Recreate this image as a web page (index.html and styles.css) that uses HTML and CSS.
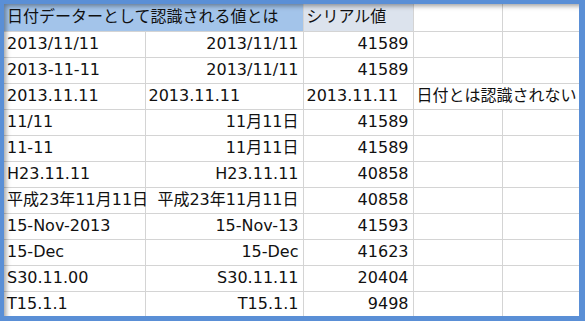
FILE: index.html
```html
<!DOCTYPE html>
<html lang="ja">
<head>
<meta charset="utf-8">
<title>日付データー</title>
<link rel="stylesheet" href="styles.css">
</head>
<body>
<div class="frame">
  <div class="sheet">
    <table class="grid">
      <colgroup>
        <col class="c-a"><col class="c-b"><col class="c-c"><col class="c-d"><col class="c-e">
      </colgroup>
      <thead>
        <tr class="head">
          <th colspan="2" class="h-main">日付データーとして認識される値とは</th>
          <th class="h-serial">シリアル値</th>
          <th></th>
          <th></th>
        </tr>
      </thead>
      <tbody>
        <tr><td>2013/11/11</td><td class="r">2013/11/11</td><td class="r">41589</td><td></td><td></td></tr>
        <tr><td>2013-11-11</td><td class="r">2013/11/11</td><td class="r">41589</td><td></td><td></td></tr>
        <tr><td>2013.11.11</td><td>2013.11.11</td><td>2013.11.11</td><td colspan="2">日付とは認識されない</td></tr>
        <tr><td>11/11</td><td class="r">11月11日</td><td class="r">41589</td><td></td><td></td></tr>
        <tr><td>11-11</td><td class="r">11月11日</td><td class="r">41589</td><td></td><td></td></tr>
        <tr><td>H23.11.11</td><td class="r">H23.11.11</td><td class="r">40858</td><td></td><td></td></tr>
        <tr><td>平成23年11月11日</td><td class="r">平成23年11月11日</td><td class="r">40858</td><td></td><td></td></tr>
        <tr><td>15-Nov-2013</td><td class="r">15-Nov-13</td><td class="r">41593</td><td></td><td></td></tr>
        <tr><td>15-Dec</td><td class="r">15-Dec</td><td class="r">41623</td><td></td><td></td></tr>
        <tr><td>S30.11.00</td><td class="r">S30.11.11</td><td class="r">20404</td><td></td><td></td></tr>
        <tr><td>T15.1.1</td><td class="r">T15.1.1</td><td class="r">9498</td><td></td><td></td></tr>
      </tbody>
    </table>
  </div>
</div>
</body>
</html>
```

FILE: styles.css
```css
html, body {
  margin: 0;
  padding: 0;
}

body {
  background: #5a8fd6;
  font-family: "DejaVu Sans", "Noto Sans CJK JP", sans-serif;
  font-size: 16px;
  color: #111;
}

.frame {
  box-sizing: border-box;
  width: 585px;
  height: 321px;
  padding: 4px 6px 5px 4px;
}

.sheet {
  position: relative;
  height: 100%;
  background: #fff;
  overflow: hidden;
}

.sheet::after {
  content: "";
  position: absolute;
  inset: 0;
  pointer-events: none;
  box-shadow: inset 5px 5px 5px -3px rgba(0, 0, 0, 0.38);
}

.grid {
  border-collapse: collapse;
  table-layout: fixed;
  width: 575px;
}

.c-a { width: 141px; }
.c-b { width: 158px; }
.c-c { width: 110px; }
.c-d { width: 89px; }
.c-e { width: 77px; }

.grid th,
.grid td {
  padding: 0 4px 0 3px;
  border: 1px solid #d4d4d4;
  white-space: nowrap;
  font-weight: normal;
  text-align: left;
  overflow: visible;
  line-height: 20px;
  vertical-align: middle;
}

.grid tr {
  height: 26px;
}

.grid tr.head {
  height: 27px;
}

.grid th {
  border-top: none;
}

.grid tr > :first-child {
  border-left: none;
}

.grid tr > :last-child {
  border-right: none;
}

.grid .r {
  text-align: right;
}

.h-main {
  background: #a3c4ea;
}

.h-serial {
  background: #dce3ed;
}
```
